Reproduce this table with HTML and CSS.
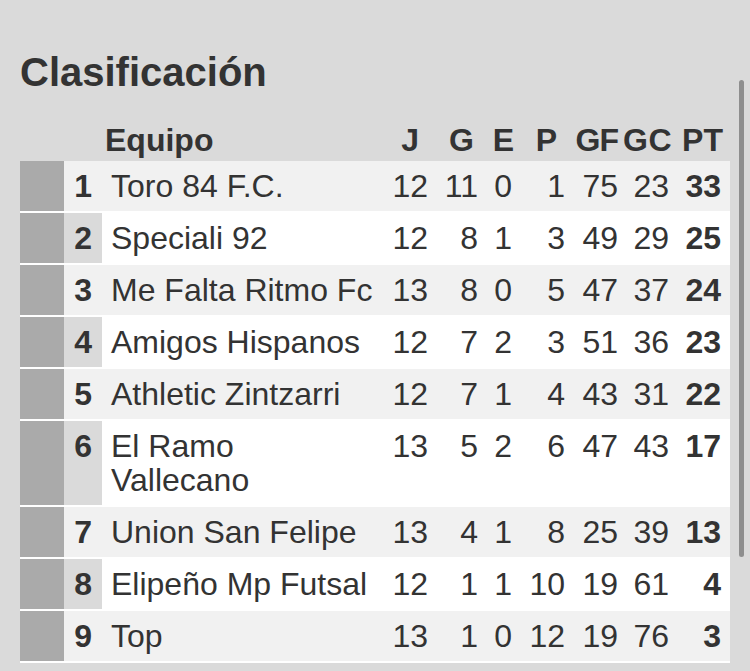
FILE: index.html
```html
<!DOCTYPE html>
<html lang="es">
<head>
<meta charset="utf-8">
<title>Clasificación</title>
<link rel="stylesheet" href="styles.css">
</head>
<body>
<main class="panel">
  <h1 class="title">Clasificación</h1>
  <table class="standings">
    <colgroup>
      <col class="w-mark"><col class="w-pos"><col class="w-name">
      <col class="w-j"><col class="w-g"><col class="w-e"><col class="w-p">
      <col class="w-gf"><col class="w-gc"><col class="w-pt">
    </colgroup>
    <thead>
      <tr>
        <th></th><th></th>
        <th class="h-name">Equipo</th>
        <th class="h-j">J</th><th class="h-g">G</th><th class="h-e">E</th><th class="h-p">P</th>
        <th class="h-gf">GF</th><th class="h-gc">GC</th><th class="h-pt">PT</th>
      </tr>
    </thead>
    <tbody>
      <tr><td class="mark"></td><td class="pos">1</td><td class="name">Toro 84 F.C.</td><td>12</td><td>11</td><td>0</td><td>1</td><td>75</td><td>23</td><td class="pts">33</td></tr>
      <tr><td class="mark"></td><td class="pos">2</td><td class="name">Speciali 92</td><td>12</td><td>8</td><td>1</td><td>3</td><td>49</td><td>29</td><td class="pts">25</td></tr>
      <tr><td class="mark"></td><td class="pos">3</td><td class="name">Me Falta Ritmo Fc</td><td>13</td><td>8</td><td>0</td><td>5</td><td>47</td><td>37</td><td class="pts">24</td></tr>
      <tr><td class="mark"></td><td class="pos">4</td><td class="name">Amigos Hispanos</td><td>12</td><td>7</td><td>2</td><td>3</td><td>51</td><td>36</td><td class="pts">23</td></tr>
      <tr><td class="mark"></td><td class="pos">5</td><td class="name">Athletic Zintzarri</td><td>12</td><td>7</td><td>1</td><td>4</td><td>43</td><td>31</td><td class="pts">22</td></tr>
      <tr><td class="mark"></td><td class="pos">6</td><td class="name">El Ramo Vallecano</td><td>13</td><td>5</td><td>2</td><td>6</td><td>47</td><td>43</td><td class="pts">17</td></tr>
      <tr><td class="mark"></td><td class="pos">7</td><td class="name">Union San Felipe</td><td>13</td><td>4</td><td>1</td><td>8</td><td>25</td><td>39</td><td class="pts">13</td></tr>
      <tr><td class="mark"></td><td class="pos">8</td><td class="name">Elipeño Mp Futsal</td><td>12</td><td>1</td><td>1</td><td>10</td><td>19</td><td>61</td><td class="pts">4</td></tr>
      <tr><td class="mark"></td><td class="pos">9</td><td class="name">Top</td><td>13</td><td>1</td><td>0</td><td>12</td><td>19</td><td>76</td><td class="pts">3</td></tr>
    </tbody>
  </table>
  <div class="scrollbar"></div>
</main>
</body>
</html>
```
FILE: styles.css
```css
html, body {
  margin: 0;
  padding: 0;
  background: #dadada;
}

body {
  font-family: "Liberation Sans", Arial, sans-serif;
  color: #333;
  width: 750px;
  height: 671px;
  overflow: hidden;
}

.panel {
  position: relative;
  padding: 52px 20px 0 20px;
  height: 619px;
}

.title {
  margin: 0;
  font-size: 40px;
  line-height: 40px;
  font-weight: bold;
  color: #333;
}

.standings {
  margin-top: 32px;
  border-collapse: collapse;
  table-layout: fixed;
  width: 710px;
}

.w-mark { width: 44px; }
.w-pos { width: 38px; }
.w-name { width: 275px; }
.w-j { width: 53px; }
.w-g { width: 50px; }
.w-e { width: 34px; }
.w-p { width: 53px; }
.w-gf { width: 53px; }
.w-gc { width: 51px; }
.w-pt { width: 59px; }

.standings th {
  font-size: 32px;
  line-height: 32px;
  font-weight: bold;
  padding: 0 0 5px 0;
  text-align: right;
  white-space: nowrap;
}

.standings th.h-name { text-align: left; padding-left: 3px; }
.standings th.h-j { padding-right: 11px; }
.standings th.h-g { padding-right: 6px; }
.standings th.h-e { padding-right: 0; }
.standings th.h-p { padding-right: 10px; }
.standings th.h-gf { padding-right: 2px; letter-spacing: -1px; }
.standings th.h-gc { text-align: left; padding-left: 3px; letter-spacing: 0.5px; }
.standings th.h-pt { padding-right: 7px; }

.standings tbody tr {
  border-bottom: 2px solid #fff;
  background: #fff;
}

.standings tbody tr:nth-child(odd) {
  background: #f1f1f1;
}

.standings td {
  font-size: 32px;
  line-height: 34px;
  padding: 8px 2px 8px 0;
  text-align: right;
  vertical-align: top;
  white-space: nowrap;
}

.standings td.mark {
  background: #aaaaaa;
  padding: 0;
}

.standings td.pos {
  font-weight: bold;
  padding-right: 10px;
  background: #dadada;
}

.standings tbody tr:nth-child(odd) td.pos {
  background: #f1f1f1;
}

.standings td.name {
  text-align: left;
  padding-left: 9px;
  white-space: normal;
}

.standings td.pts {
  font-weight: bold;
  padding-right: 9px;
}

.scrollbar {
  position: absolute;
  left: 739px;
  top: 80px;
  width: 5px;
  height: 477px;
  border-radius: 3px;
  background: #8e8e8e;
}
```
